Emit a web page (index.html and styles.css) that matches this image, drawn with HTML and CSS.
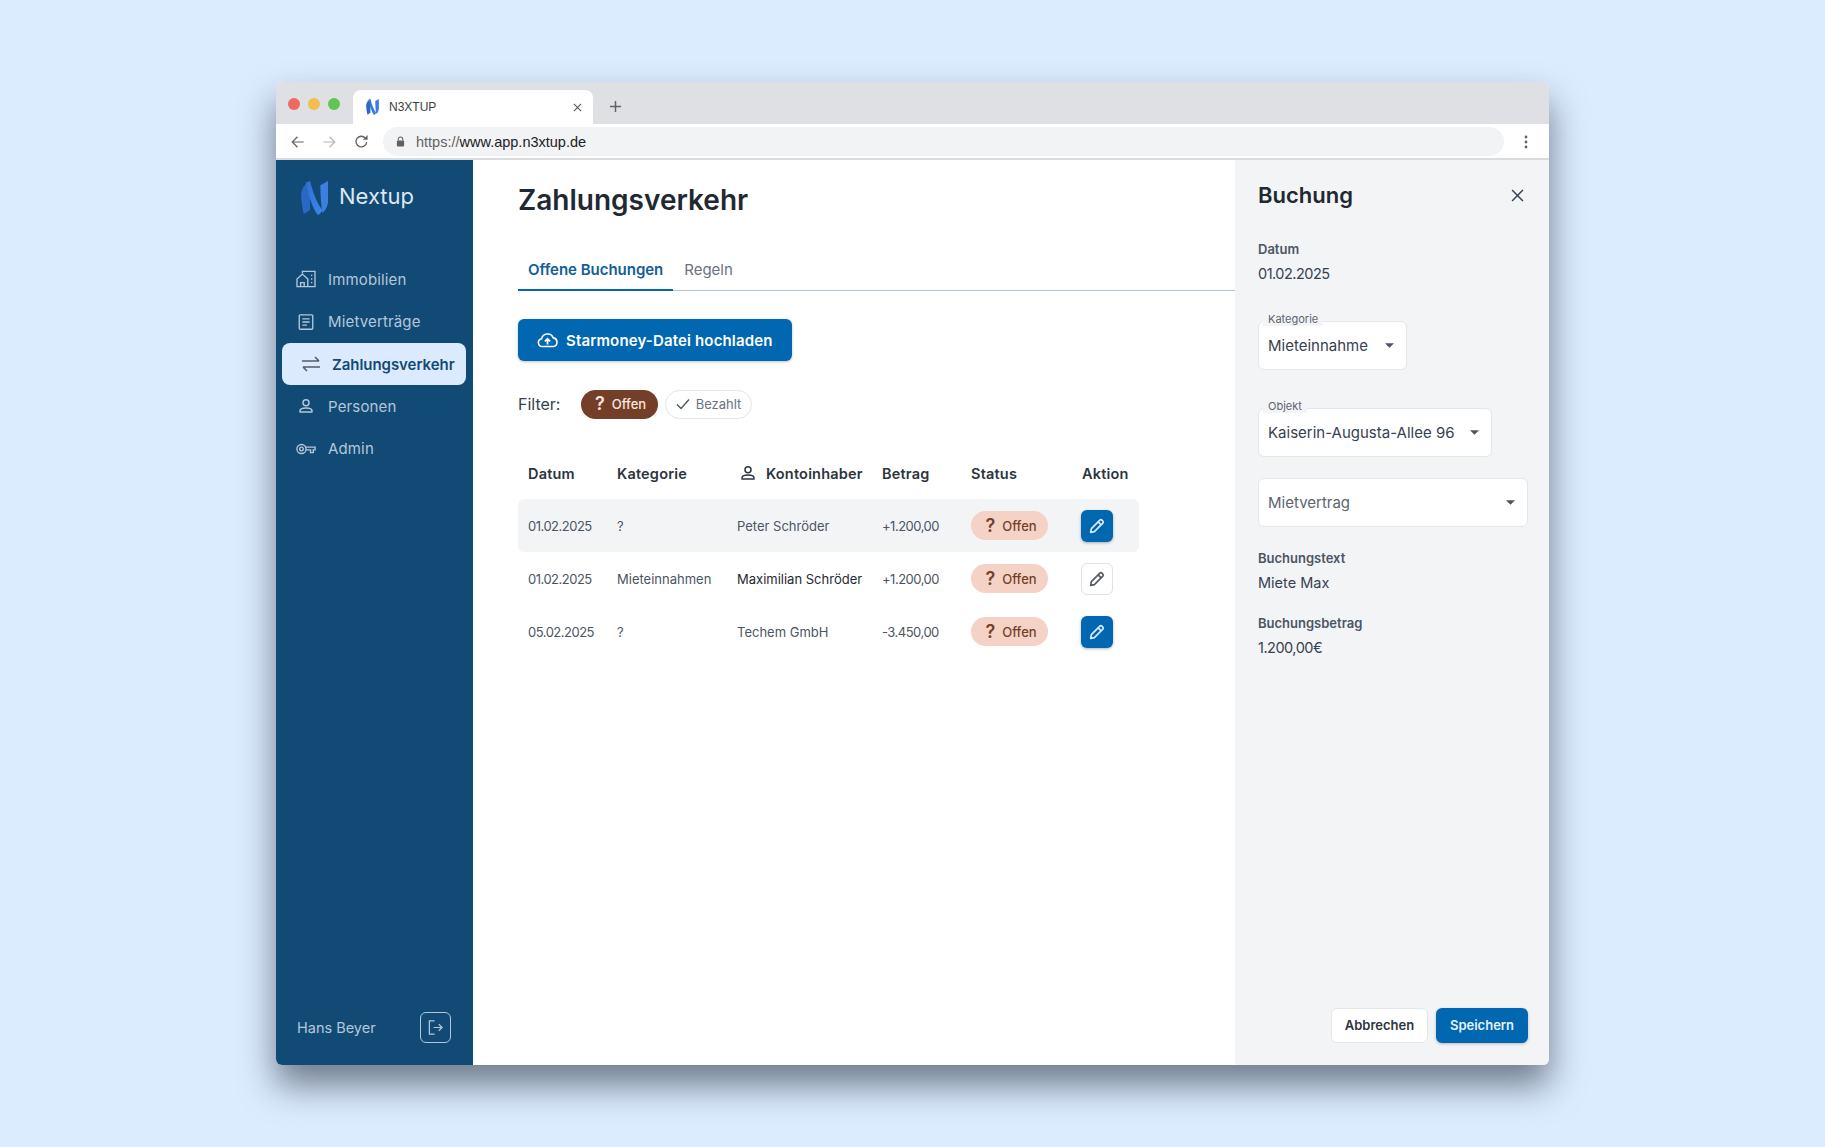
FILE: index.html
```html
<!DOCTYPE html>
<html lang="de">
<head>
  <meta charset="utf-8">
  <title>N3XTUP</title>
  <link rel="stylesheet" href="styles.css">
</head>
<body>
  <svg class="defs" width="0" height="0" aria-hidden="true">
    <defs>
      <linearGradient id="logoLeft" x1="0" y1="0" x2="1" y2="1">
        <stop offset="0" stop-color="#2f6fd6"/>
        <stop offset="1" stop-color="#3f86e8"/>
      </linearGradient>
      <symbol id="logo" viewBox="0 0 78 98">
        <path d="M0 38C2 20 12 6 26 1L26 84L8 96C4 80 1 58 0 38Z" fill="#2b68c4"/>
        <path d="M14 4L26 0C34 30 44 62 62 84C58 92 54 96 49 98C32 78 22 40 14 4Z" fill="url(#logoLeft)"/>
        <path d="M56 12L78 0L78 62C76 76 70 86 62 92C58 70 56 40 56 12Z" fill="#3c7fe0"/>
      </symbol>
      <symbol id="pencil" viewBox="0 0 24 24">
        <path fill="none" stroke="currentColor" stroke-width="2.200" stroke-linejoin="round" d="M3.500 20.500l1-5L15.800 4.200a2 2 0 0 1 2.800 0l1.200 1.200a2 2 0 0 1 0 2.800L8.500 19.500z"/>
        <path fill="none" stroke="currentColor" stroke-width="2.200" d="M13.500 6.500l4 4"/>
      </symbol>
      <symbol id="person" viewBox="0 0 24 24">
        <circle cx="12" cy="7.500" r="4" fill="none" stroke="currentColor" stroke-width="2"/>
        <path d="M4 20v-1.500c0-2.600 4-4 8-4s8 1.400 8 4V20z" fill="none" stroke="currentColor" stroke-width="2" stroke-linejoin="round"/>
      </symbol>
      <symbol id="caret" viewBox="0 0 10 5">
        <path d="M0 0h10L5 5z" fill="currentColor"/>
      </symbol>
    </defs>
  </svg>

  <div class="window">
    <div class="tabbar">
      <div class="lights">
        <span class="light red"></span>
        <span class="light yellow"></span>
        <span class="light green"></span>
      </div>
      <div class="tab">
        <svg class="favicon"><use href="#logo"/></svg>
        <span class="tab-title">N3XTUP</span>
        <svg class="tab-close" viewBox="0 0 10 10"><path d="M1 1l8 8M9 1l-8 8" stroke="#555" stroke-width="1.200"/></svg>
      </div>
      <svg class="tab-new" viewBox="0 0 14 14"><path d="M7 1v12M1 7h12" stroke="#5f6368" stroke-width="1.600"/></svg>
    </div>

    <div class="toolbar">
      <svg class="nav-arrow" viewBox="0 0 16 16"><path d="M15 8H2M8 2L2 8l6 6" fill="none" stroke="#5f6368" stroke-width="1.400"/></svg>
      <svg class="nav-arrow" viewBox="0 0 16 16"><path d="M1 8h13M8 2l6 6-6 6" fill="none" stroke="#b5b8bc" stroke-width="1.400"/></svg>
      <svg class="nav-reload" viewBox="0 0 16 16"><path d="M13.500 8.500A5.700 5.700 0 1 1 12 4.200" fill="none" stroke="#5f6368" stroke-width="1.400"/><path d="M14.500 1v5h-5z" fill="#5f6368"/></svg>
      <div class="urlbar">
        <svg class="lock" viewBox="0 0 10 12"><path d="M2.500 5V3.500a2.500 2.500 0 0 1 5 0V5" fill="none" stroke="#5f6368" stroke-width="1.200"/><rect x="1" y="5" width="8" height="6.500" rx="1" fill="#5f6368"/></svg>
        <span class="url"><span class="url-scheme">https://</span>www.app.n3xtup.de</span>
      </div>
      <svg class="menu-dots" viewBox="0 0 4 14"><circle cx="2" cy="2" r="1.400"/><circle cx="2" cy="7" r="1.400"/><circle cx="2" cy="12" r="1.400"/></svg>
    </div>

    <div class="app">
      <aside class="sidebar">
        <div class="brand">
          <svg class="brand-logo"><use href="#logo"/></svg>
          <span class="brand-name">Nextup</span>
        </div>
        <nav class="nav">
          <a class="nav-item">
            <svg class="nav-icon" viewBox="0 0 22 20" fill="none" stroke="currentColor" stroke-width="1.500"><path d="M1 18.500V10L7 4.500 13 10v8.500zM5 18.500V14h4v4.500M7 3.500V1.500h14v17H13"/><path d="M16.500 6h1.500M16.500 10h1.500M16.500 14h1.500"/></svg>
            Immobilien
          </a>
          <a class="nav-item">
            <svg class="nav-icon" viewBox="0 0 22 20" fill="none" stroke="currentColor" stroke-width="1.500"><rect x="3.500" y="2" width="15" height="16" rx="1"/><path d="M7 6.500h8M7 10h8M7 13.500h5"/></svg>
            Mietverträge
          </a>
          <a class="nav-item active">
            <svg class="nav-icon" viewBox="0 0 20 16" fill="none" stroke="#555c63" stroke-width="1.600"><path d="M1 5h17M14 1l4 4M19 11H2M6 15l-4-4"/></svg>
            Zahlungsverkehr
          </a>
          <a class="nav-item">
            <svg class="nav-icon"><use href="#person"/></svg>
            Personen
          </a>
          <a class="nav-item">
            <svg class="nav-icon" viewBox="0 0 22 14" fill="none" stroke="currentColor" stroke-width="1.500"><circle cx="6" cy="7" r="5"/><circle cx="6" cy="7" r="2"/><path d="M11 5h10v3h-2v3h-3V8h-5"/></svg>
            Admin
          </a>
        </nav>
        <div class="sidebar-footer">
          <span class="user-name">Hans Beyer</span>
          <span class="logout">
            <svg viewBox="0 0 18 18" fill="none" stroke="currentColor" stroke-width="1.300"><path d="M8 2H2.500v14H8"/><path d="M7 9h9M12.500 5.500L16 9l-3.500 3.500"/></svg>
          </span>
        </div>
      </aside>

      <main class="content">
        <h1 class="page-title">Zahlungsverkehr</h1>
        <div class="tabs">
          <a class="tabs-item selected">Offene Buchungen</a>
          <a class="tabs-item">Regeln</a>
        </div>
        <button class="upload-btn">
          <svg viewBox="0 0 24 18" fill="none" stroke="currentColor" stroke-width="1.800"><path d="M6 16.500a4.500 4.500 0 0 1-.8-8.900A7 7 0 0 1 18.600 6.600 5 5 0 0 1 18.500 16.500z"/><path d="M12 14V8M9 10.500l3-3 3 3" stroke-width="2"/></svg>
          Starmoney-Datei hochladen
        </button>
        <div class="filter">
          <span class="filter-label">Filter:</span>
          <span class="chip chip-on"><b class="qmark">?</b> Offen</span>
          <span class="chip chip-off">
            <svg viewBox="0 0 14 12" fill="none" stroke="#4b5563" stroke-width="1.400"><path d="M1 6.500L5 10.500 13 1.500"/></svg>
            Bezahlt
          </span>
        </div>

        <div class="table">
          <div class="table-row table-head">
            <span>Datum</span>
            <span>Kategorie</span>
            <span class="owner-head"><svg><use href="#person"/></svg>Kontoinhaber</span>
            <span>Betrag</span>
            <span>Status</span>
            <span>Aktion</span>
          </div>
          <div class="table-row shaded">
            <span class="num">01.02.2025</span>
            <span>?</span>
            <span>Peter Schröder</span>
            <span class="num">+1.200,00</span>
            <span><span class="pill"><b class="qmark">?</b> Offen</span></span>
            <span><span class="edit edit-blue"><svg><use href="#pencil"/></svg></span></span>
          </div>
          <div class="table-row">
            <span class="num">01.02.2025</span>
            <span>Mieteinnahmen</span>
            <span class="dark">Maximilian Schröder</span>
            <span class="num">+1.200,00</span>
            <span><span class="pill"><b class="qmark">?</b> Offen</span></span>
            <span><span class="edit edit-white"><svg><use href="#pencil"/></svg></span></span>
          </div>
          <div class="table-row">
            <span class="num">05.02.2025</span>
            <span>?</span>
            <span>Techem GmbH</span>
            <span class="num">-3.450,00</span>
            <span><span class="pill"><b class="qmark">?</b> Offen</span></span>
            <span><span class="edit edit-blue"><svg><use href="#pencil"/></svg></span></span>
          </div>
        </div>
      </main>

      <aside class="panel">
        <div class="panel-head">
          <h2>Buchung</h2>
          <svg viewBox="0 0 12 12"><path d="M1 1l10 10M11 1L1 11" stroke="#374151" stroke-width="1.400"/></svg>
        </div>
        <div class="field-label first">Datum</div>
        <div class="field-value num">01.02.2025</div>

        <div class="select select-sm">
          <span class="select-label">Kategorie</span>
          <span>Mieteinnahme</span>
          <svg class="caret"><use href="#caret"/></svg>
        </div>
        <div class="select select-md">
          <span class="select-label">Objekt</span>
          <span>Kaiserin-Augusta-Allee 96</span>
          <svg class="caret"><use href="#caret"/></svg>
        </div>
        <div class="select select-full">
          <span class="placeholder">Mietvertrag</span>
          <svg class="caret"><use href="#caret"/></svg>
        </div>

        <div class="field-label">Buchungstext</div>
        <div class="field-value">Miete Max</div>
        <div class="field-label">Buchungsbetrag</div>
        <div class="field-value num">1.200,00€</div>

        <div class="panel-actions">
          <button class="btn btn-cancel">Abbrechen</button>
          <button class="btn btn-save">Speichern</button>
        </div>
      </aside>
    </div>
  </div>
</body>
</html>
```

FILE: styles.css
```css
* {
  box-sizing: border-box;
}
html, body {
  height: 100%;
}
body {
  margin: 0;
  padding: 82px 276px 0;
  background-color: #dbecfe;
  font-family: Inter, "Noto Sans", sans-serif;
  color: #374151;
  overflow: hidden;
}
.defs {
  position: absolute;
}

/* browser chrome */
.window {
  width: 1273px;
  height: 983px;
  display: flex;
  flex-direction: column;
  border-radius: 6px;
  background-color: #fff;
  box-shadow: 0 20px 35px rgba(20, 30, 45, 0.55);
  overflow: hidden;
}
.tabbar {
  height: 42px;
  flex-shrink: 0;
  display: flex;
  align-items: flex-end;
  background-color: #dfe0e4;
}
.lights {
  display: flex;
  gap: 8px;
  padding: 0 0 14px 12px;
  width: 77px;
}
.light {
  width: 12px;
  height: 12px;
  border-radius: 50%;
}
.red { background-color: #ee6a5f; }
.yellow { background-color: #f5bd4f; }
.green { background-color: #61c454; }
.tab {
  width: 240px;
  height: 34px;
  display: flex;
  align-items: center;
  padding: 0 11px 0 13px;
  background-color: #fff;
  border-radius: 8px 8px 0 0;
}
.favicon {
  width: 13px;
  height: 16px;
}
.tab-title {
  margin-left: 10px;
  flex: 1;
  font: 12px "Liberation Sans", sans-serif;
  color: #3c4043;
}
.tab-close {
  width: 9px;
  height: 9px;
}
.tab-new {
  width: 13px;
  height: 13px;
  margin: 0 0 11px 16px;
}
.toolbar {
  height: 36px;
  flex-shrink: 0;
  display: flex;
  align-items: center;
  padding: 1px 0 0 14px;
  border-bottom: 2px solid #dadce0;
  background-color: #fff;
}
.nav-arrow {
  width: 15px;
  height: 14px;
  margin-right: 17px;
}
.nav-reload {
  width: 15px;
  height: 15px;
  margin-right: 14px;
}
.urlbar {
  width: 1121px;
  height: 29px;
  display: flex;
  align-items: center;
  padding-left: 13px;
  border-radius: 15px;
  background-color: #f1f3f4;
}
.lock {
  width: 9px;
  height: 11px;
  margin-right: 11px;
}
.url {
  font: 14.5px "Liberation Sans", sans-serif;
  color: #202124;
}
.url-scheme {
  color: #5f6368;
}
.menu-dots {
  width: 4px;
  height: 14px;
  margin-left: 20px;
  fill: #5f6368;
}

.app {
  flex: 1;
  display: flex;
  min-height: 0;
}

/* sidebar */
.sidebar {
  width: 197px;
  flex-shrink: 0;
  display: flex;
  flex-direction: column;
  background-color: #124a76;
  color: #b4c7d9;
}
.brand {
  display: flex;
  align-items: center;
  padding: 21px 0 0 25px;
}
.brand-logo {
  width: 27px;
  height: 34px;
}
.brand-name {
  margin-left: 11px;
  padding-bottom: 4px;
  font-size: 22px;
  color: #dce7f1;
}
.nav {
  margin-top: 43px;
  padding: 0 7px 0 6px;
}
.nav-item {
  height: 42.5px;
  display: flex;
  align-items: center;
  gap: 12px;
  padding-left: 14px;
  font-size: 15px;
  letter-spacing: 0.15px;
}
.nav-icon {
  width: 20px;
  height: 18px;
  flex-shrink: 0;
}
.nav-item.active {
  height: 42px;
  padding-left: 19px;
  gap: 11px;
  border-radius: 8px;
  background-color: #dbeafe;
  color: #124a76;
  font-weight: 600;
  letter-spacing: -0.05px;
}
.sidebar-footer {
  margin-top: auto;
  display: flex;
  align-items: center;
  justify-content: space-between;
  padding: 0 22px 22px 21px;
}
.user-name {
  font-size: 14.5px;
}
.logout {
  width: 31px;
  height: 31px;
  display: flex;
  align-items: center;
  justify-content: center;
  border: 1px solid #b4c7d9;
  border-radius: 6px;
}
.logout svg {
  width: 17px;
  height: 17px;
}

/* main column */
.content {
  flex: 1;
  min-width: 0;
  padding: 23px 0 0 45px;
}
.page-title {
  margin: 0;
  font-size: 28px;
  line-height: 34px;
  font-weight: 600;
  color: #1f2933;
}
.tabs {
  margin-top: 33px;
  height: 41px;
  display: flex;
  border-bottom: 1px solid #b4c2d0;
}
.tabs-item {
  height: 41px;
  padding: 0 10px 0 11px;
  line-height: 40px;
  font-size: 15px;
  color: #6b7280;
}
.tabs-item.selected {
  padding: 0 10px;
  border-bottom: 2px solid #0067b0;
  color: #125d9c;
  font-weight: 600;
  letter-spacing: -0.03px;
}
.upload-btn {
  margin-top: 28px;
  width: 274px;
  height: 42px;
  display: flex;
  align-items: center;
  gap: 8px;
  padding: 0 0 0 19px;
  border: none;
  border-radius: 6px;
  background-color: #0067b0;
  box-shadow: 0 1px 3px rgba(0, 0, 0, 0.25);
  color: #fff;
  font-family: inherit;
  font-size: 15px;
  font-weight: 600;
  letter-spacing: 0.15px;
}
.upload-btn svg {
  width: 21px;
  height: 16px;
}
.filter {
  margin-top: 29px;
  height: 29px;
  display: flex;
  align-items: center;
}
.filter-label {
  width: 63px;
  padding-bottom: 2px;
  font-size: 16px;
}
.chip {
  height: 29px;
  display: flex;
  align-items: center;
  justify-content: center;
  padding-bottom: 2px;
  border-radius: 15px;
  font-size: 13px;
}
.chip-on {
  width: 77px;
  gap: 7px;
  padding-left: 2px;
  background-color: #743f29;
  color: #fbe5dc;
  font-weight: 500;
}
.chip-off {
  width: 87px;
  margin-left: 7px;
  gap: 6px;
  border: 1px solid #e2e5ea;
  color: #6b7280;
}
.chip-off svg {
  width: 14px;
  height: 12px;
}
.qmark {
  font-size: 18px;
  font-weight: 600;
}

.table {
  margin-top: 30px;
  width: 621px;
}
.table-row {
  height: 53px;
  display: grid;
  grid-template-columns: 89px 120px 145px 89px 111px 1fr;
  align-items: center;
  padding-left: 10px;
  font-size: 13px;
  color: #4b5563;
}
.table-head {
  height: 50px;
  padding-bottom: 2px;
  font-size: 14.5px;
  font-weight: 600;
  letter-spacing: 0.2px;
  color: #2b3540;
}
.shaded {
  border-radius: 6px;
  background-color: #f3f4f6;
}
.dark {
  color: #1f2933;
}
.num {
  letter-spacing: -0.5px;
}
.owner-head {
  display: flex;
  align-items: center;
  gap: 9px;
  padding-left: 2px;
}
.owner-head svg {
  width: 18px;
  height: 18px;
}
.pill {
  width: 77px;
  height: 29px;
  display: flex;
  align-items: center;
  justify-content: center;
  gap: 7px;
  padding-left: 3px;
  border-radius: 15px;
  background-color: #f4d3c6;
  color: #743f29;
  font-weight: 500;
}
.edit {
  width: 32px;
  height: 32px;
  display: flex;
  align-items: center;
  justify-content: center;
  margin-left: -1px;
  border-radius: 6px;
}
.edit svg {
  width: 18px;
  height: 18px;
}
.edit-blue {
  background-color: #0067b0;
  box-shadow: 0 1px 3px rgba(0, 0, 0, 0.3);
  color: #dbeafe;
}
.edit-white {
  border: 1px solid #dfe2e8;
  background-color: #fff;
  color: #555c63;
}

/* detail panel */
.panel {
  width: 314px;
  flex-shrink: 0;
  display: flex;
  flex-direction: column;
  padding: 19px 21px 22px 23px;
  background-color: #f3f4f6;
}
.panel-head {
  height: 32px;
  display: flex;
  align-items: center;
  justify-content: space-between;
  padding-right: 4px;
}
.panel-head h2 {
  margin: 0;
  font-size: 22px;
  font-weight: 600;
  color: #1f2933;
}
.panel-head svg {
  width: 13px;
  height: 13px;
}
.field-label {
  margin-top: 20px;
  font-size: 13px;
  line-height: 18px;
  font-weight: 600;
  color: #4b5563;
}
.field-label.first {
  margin-top: 29px;
}
.field-value {
  margin-top: 5px;
  font-size: 14.5px;
  line-height: 22px;
  color: #374151;
}
.select {
  position: relative;
  height: 49px;
  margin-top: 38px;
  display: flex;
  align-items: center;
  justify-content: space-between;
  padding: 0 12px 0 9px;
  border: 1px solid #e3e6eb;
  border-radius: 6px;
  background-color: #fff;
  font-size: 15px;
}
.select-sm {
  width: 149px;
  margin-top: 36px;
}
.select-md {
  width: 234px;
}
.select-full {
  width: 270px;
  margin-top: 21px;
}
.select-full + .field-label {
  margin-top: 22px;
}
.select-label {
  position: absolute;
  left: 4px;
  top: -10px;
  padding: 0 5px;
  background-color: #f3f4f6;
  font-size: 11px;
  line-height: 14px;
  color: #5b6470;
}
.placeholder {
  color: #5b6470;
}
.caret {
  width: 9px;
  height: 5px;
  color: #4b5563;
}
.panel-actions {
  margin-top: auto;
  display: flex;
  justify-content: flex-end;
  gap: 8px;
}
.btn {
  height: 35px;
  padding-bottom: 2px;
  border-radius: 6px;
  font-family: inherit;
  font-size: 13px;
  font-weight: 600;
}
.btn-cancel {
  width: 97px;
  border: 1px solid #e3e6eb;
  background-color: #fff;
  color: #2b3540;
}
.btn-save {
  width: 92px;
  border: none;
  background-color: #0067b0;
  box-shadow: 0 1px 3px rgba(0, 0, 0, 0.25);
  color: #e6f0f8;
}
```
